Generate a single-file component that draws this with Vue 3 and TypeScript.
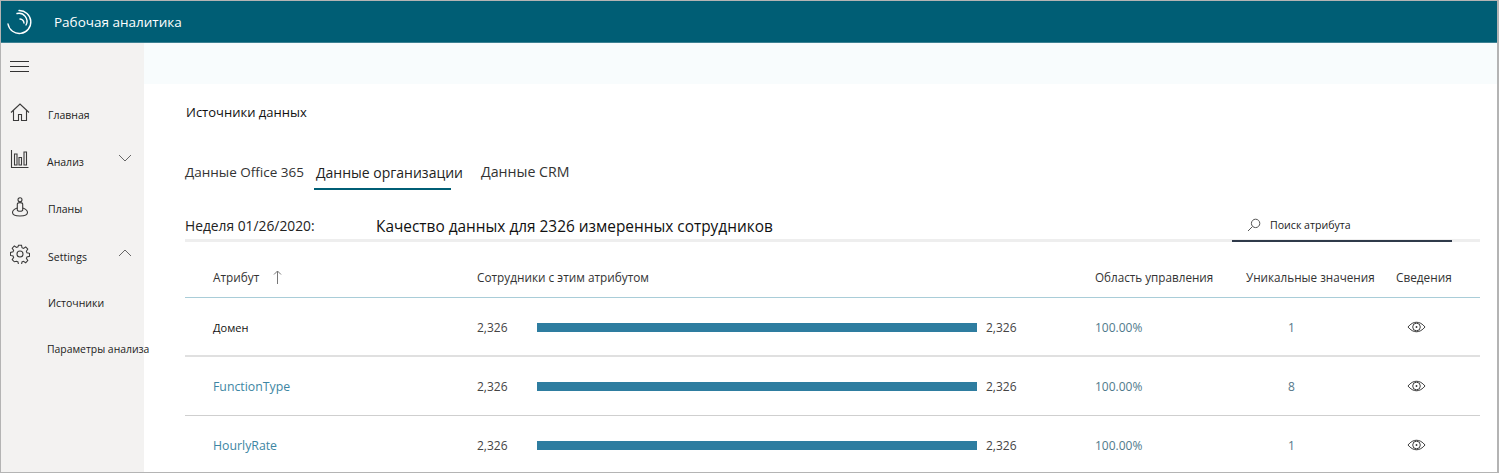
<template>
  <div class="frame">
    <header class="topbar">
      <svg class="logo" viewBox="0 0 26 26" width="26" height="26" fill="none" stroke="#fff" stroke-width="1.4" stroke-linecap="round">
        <path d="M12 1.500A11.500 11.500 0 1 1 1 15" />
        <path d="M10 4.500A8 8 0 0 1 19 16" />
        <path d="M13 10A4.500 4.500 0 0 1 17 14" />
      </svg>
      <span class="product">Рабочая аналитика</span>
    </header>

    <div class="body">
      <aside class="side">
        <button class="burger" aria-label="menu"><i></i><i></i><i></i></button>
        <nav class="nav">
          <div v-for="item in nav" :key="item.label" class="nav-row" :class="item.cls">
            <svg v-if="item.icon" class="nav-icon" viewBox="0 0 20 20" width="20" height="20" fill="none" stroke="#3a3a3a" stroke-width="1.100" v-html="item.icon"></svg>
            <span class="nav-label">{{ item.label }}</span>
            <svg v-if="item.chevron" class="chev" viewBox="0 0 14 8" width="14" height="8" fill="none" stroke="#666" stroke-width="1">
              <path :d="item.chevron === 'down' ? 'M1 1l6 6 6-6' : 'M1 7l6-6 6 6'" />
            </svg>
          </div>
        </nav>
      </aside>

      <main class="main">
        <div class="band"></div>
        <section class="content">
          <h1 class="title">Источники данных</h1>
          <div class="tabs">
            <span class="tab">Данные Office 365</span>
            <span class="tab active">Данные организации</span>
            <span class="tab crm">Данные CRM</span>
          </div>

          <div class="summary">
            <span class="week">Неделя 01/26/2020:</span>
            <span class="quality">Качество данных для 2326 измеренных сотрудников</span>
            <div class="search">
              <svg viewBox="0 0 14 14" width="14" height="14" fill="none" stroke="#555" stroke-width="1">
                <circle cx="8.600" cy="5.400" r="4.200" />
                <path d="M5.500 8.500L1 13" />
              </svg>
              <span>Поиск атрибута</span>
            </div>
          </div>

          <div class="grid head">
            <div class="attr-head">Атрибут
              <svg viewBox="0 0 9 14" width="9" height="14" fill="none" stroke="#777" stroke-width="1">
                <path d="M4.500 14V1M1 4.500L4.500 1 8 4.500" />
              </svg>
            </div>
            <div>Сотрудники с этим атрибутом</div>
            <div class="narrow">Область управления</div>
            <div class="narrow">Уникальные значения</div>
            <div>Сведения</div>
          </div>

          <div v-for="row in rows" :key="row.name" class="grid row">
            <div :class="row.link ? 'link' : 'plain'">{{ row.name }}</div>
            <div class="bar-cell">
              <span class="num">2,326</span>
              <div class="bar" :style="{ width: row.coverage * 440 + 'px' }"></div>
              <span class="num">2,326</span>
            </div>
            <div class="pct">100.00%</div>
            <div class="uniq">{{ row.unique }}</div>
            <div class="eye">
              <svg viewBox="0 0 20 12" width="19" height="12" fill="none" stroke="#333" stroke-width="1">
                <path d="M1 6C4 2.400 7 1 10 1s6 1.400 9 5c-3 3.600-6 5-9 5S4 9.600 1 6z" />
                <circle cx="10" cy="6" r="4" />
                <circle cx="10" cy="6" r="1" fill="#333" stroke="none" />
              </svg>
            </div>
          </div>
        </section>
      </main>
    </div>
  </div>
</template>

<script setup lang="ts">
interface NavItem {
  label: string
  icon?: string
  chevron?: 'up' | 'down'
  cls?: string
}

interface Row {
  name: string
  link: boolean
  coverage: number
  unique: number
}

const nav: NavItem[] = [
  { label: 'Главная', icon: '<path d="M1 10.500L10 2l9 8.500M3.500 8.500V18.500h5v-6h3v6h5V8.500"/>' },
  { label: 'Анализ', cls: 'tight', chevron: 'down', icon: '<path d="M1.500 1v17.500h17"/><path d="M4.500 5h2.500v11H4.500zM9 8.500h2.500V16H9zM14 3h2.500v13H14z"/>' },
  { label: 'Планы', icon: '<circle cx="10" cy="2.800" r="2"/><path d="M7.300 13V7.200Q7.300 5.600 10 5.600t2.700 1.600V13"/><path d="M7.300 11C4.500 12 2.500 13.500 2.500 15.500c0 2.200 3.300 3.500 7.500 3.500s7.500-1.300 7.500-3.500c0-2-2-3.500-4.800-4.500"/><path d="M7.300 13c0 1.600 5.400 1.600 5.400 0"/>' },
  { label: 'Settings', chevron: 'up', icon: '<circle cx="10" cy="10" r="3"/><path d="M8.400 1h3.200l.5 2.700 1.500.7 2.400-1.500 2.200 2.300-1.500 2.300.6 1.500 2.700.6v3.200l-2.700.6-.6 1.500 1.500 2.300-2.200 2.300-2.400-1.500-1.500.7-.5 2.700H8.400l-.5-2.700-1.500-.7L4 18.500 1.800 16.200l1.500-2.300-.6-1.500L0 11.800V8.600l2.700-.6.6-1.500L1.800 4.200 4 1.900l2.400 1.500 1.500-.7z" transform="translate(.5 .2) scale(.95)"/>' },
  { label: 'Источники', cls: 'sub' },
  { label: 'Параметры анализа', cls: 'sub tight' },
]

const rows: Row[] = [
  { name: 'Домен', link: false, coverage: 1, unique: 1 },
  { name: 'FunctionType', link: true, coverage: 1, unique: 8 },
  { name: 'HourlyRate', link: true, coverage: 1, unique: 1 },
]
</script>

<style>
html, body { margin: 0; background: #fff; overflow: hidden; }
</style>

<style scoped>
.frame {
  width: 1499px;
  height: 473px;
  box-sizing: border-box;
  border: 1px solid #b4b4b4;
  border-right-width: 2px;
  display: flex;
  flex-direction: column;
  overflow: hidden;
  font-family: "Open Sans", "Noto Sans", sans-serif;
  color: #222;
  background: #fff;
}

/* Шапка */
.topbar {
  height: 41px;
  flex: none;
  background: #005e75;
  border-bottom: 1px solid #3d8193;
  display: flex;
  align-items: center;
  padding-left: 6px;
  color: #fff;
}
.logo { flex: none; }
.product { margin-left: 21px; font-size: 13.500px; }

.body { flex: 1; display: flex; min-height: 0; }

/* Боковое меню */
.side {
  width: 143px;
  flex: none;
  background: #f3f2f1;
  position: relative;
}
.burger {
  display: grid;
  gap: 4px;
  margin: 18px 0 0 9px;
  padding: 0;
  border: 0;
  background: none;
}
.burger i { display: block; width: 19px; height: 1px; background: #333; }
.nav {
  margin-top: 19px;
  display: grid;
  grid-template-rows: 47px 47px 48px 47px 45px 47px;
}
.nav-row { display: flex; align-items: center; padding-left: 9px; white-space: nowrap; }
.nav-icon { width: 20px; height: 20px; flex: none; margin-top: -5px; }
.nav-label { margin-left: 18px; font-size: 10.500px; color: #222; }
.tight .nav-label { margin-left: 17px; }
.chev { position: absolute; left: 117px; margin-top: -7px; }
.sub .nav-label { margin-left: 38px; }
.sub.tight .nav-label { margin-left: 37px; font-size: 10.400px; }

/* Контент */
.main { flex: 1; min-width: 0; display: flex; flex-direction: column; }
.band { height: 41px; flex: none; background: #f8fcfd; }
.content { padding: 18px 17px 0 41px; }
.title { margin: 0 0 0 1px; font-size: 13px; font-weight: 400; line-height: 20px; color: #111; }

.tabs { display: flex; align-items: flex-start; margin-top: 40px; height: 48px; }
.tab { font-size: 13.500px; line-height: 20px; color: #333; white-space: nowrap; }
.active {
  width: 137px;
  box-sizing: border-box;
  margin-left: 10px;
  padding: 1px 0 5px 2px;
  border-bottom: 2px solid #005e75;
  font-size: 14px;
  color: #222;
}
.crm { margin-left: 30px; font-size: 14.200px; }

.summary {
  display: flex;
  align-items: flex-end;
  height: 29px;
  border-bottom: 3px solid #eeeeee;
  position: relative;
}
.week { width: 191px; font-size: 13.800px; line-height: 22px; color: #222; margin-bottom: 2px; }
.quality { font-size: 15.400px; line-height: 24px; color: #111; }
.search {
  position: absolute;
  left: 1047px;
  bottom: -3px;
  width: 220px;
  height: 29px;
  box-sizing: border-box;
  border-bottom: 2px solid #2f3a4a;
  display: flex;
  align-items: center;
  padding: 0 0 4px 15px;
  gap: 9px;
  font-size: 10.600px;
  color: #222;
}

.grid {
  display: grid;
  grid-template-columns: 292px 618px 151px 150px 84px;
  align-items: center;
}
.head {
  height: 56px;
  padding-top: 14px;
  box-sizing: border-box;
  border-bottom: 1px solid #a9cdd8;
  font-size: 11.800px;
  color: #333;
}
.head > div { white-space: nowrap; }
.head .narrow { font-size: 11.700px; }
.attr-head { padding-left: 28px; display: flex; align-items: center; gap: 14px; }
.row { height: 59px; box-sizing: border-box; border-bottom: 1px solid #cfcfcf; font-size: 12px; }
/* первая строка отделена линией потолще */
.head + .row { border-bottom: 2px solid #e0e0e0; padding-top: 1px; }
.plain { padding-left: 28px; font-size: 11px; color: #111; }
.link { padding-left: 28px; font-size: 12.300px; color: #3d86a3; }
.bar-cell { display: flex; align-items: center; }
.num { width: 60px; color: #444; }
.bar { height: 9px; background: #2e7da0; margin-right: 9px; }
.pct { color: #4f7a8c; }
.uniq { padding-left: 42px; color: #56788a; }
.eye { padding-left: 11px; line-height: 0; }
</style>
